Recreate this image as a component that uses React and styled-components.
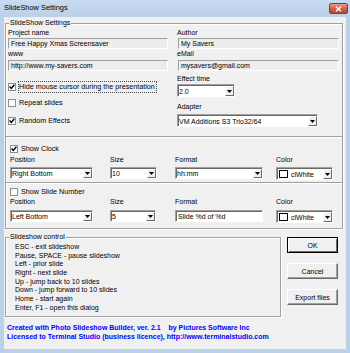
import React from 'react'
import styled, { createGlobalStyle } from 'styled-components'

const GlobalStyle = createGlobalStyle`
  html, body {
    margin: 0;
    padding: 0;
  }
  body {
    font-family: "Liberation Sans", Arial, sans-serif;
    font-size: 7px;
    color: #000;
  }
`;

const Window = styled.div`
  width: 350px;
  height: 353px;
  box-sizing: border-box;
  padding: 0 4px 4px 4px;
  background: linear-gradient(#c8dbef, #bad1ea 16px, #bad1ea);
  display: flex;
  flex-direction: column;
`;

const TitleBar = styled.div`
  height: 17px;
  flex: none;
  display: flex;
  justify-content: space-between;
  align-items: flex-start;
`;

const Title = styled.div`
  padding-top: 4px;
  font-size: 7.4px;
  line-height: 8px;
`;

const CloseButton = styled.div`
  margin: 3px -2px 0 0;
  width: 19px;
  height: 11px;
  box-sizing: border-box;
  border: 1px solid #8a3a31;
  border-radius: 2px;
  background: linear-gradient(#e6a192, #d0604f 50%, #c04532);
  display: flex;
  align-items: center;
  justify-content: center;
`;

const Client = styled.div`
  flex: 1;
  background: #f0f0f0;
  padding: 0 3px 0 1px;
  display: flex;
  flex-direction: column;
`;

const Group = styled.div`
  position: relative;
  box-sizing: border-box;
  border: 1px solid #a0a0a0;
  box-shadow: inset 1px 1px 0 #fff, 1px 1px 0 #fff;
`;

const Legend = styled.span`
  position: absolute;
  top: -5px;
  left: 3px;
  padding: 0 1px;
  line-height: 8px;
  background: #f0f0f0;
`;

const MainGroup = styled(Group)`
  margin-top: 6px;
  height: 114px;
  padding: 5px 3px 0 2px;
  display: flex;
  gap: 9px;
`;

const Column = styled.div`
  width: ${p => p.$w}px;
  display: flex;
  flex-direction: column;
`;

const Label = styled.div`
  line-height: 8px;
  height: 8px;
  margin-top: ${p => p.$mt || 0}px;
  white-space: nowrap;
`;

const Field = styled.div`
  box-sizing: border-box;
  height: 11px;
  margin: ${p => p.$mt || 0}px 0 0 ${p => p.$ml || 0}px;
  padding-left: 2px;
  line-height: 9px;
  background: #ededed;
  border: 1px solid;
  border-color: #a0a0a0 #fff #fff #a0a0a0;
  white-space: nowrap;
  overflow: hidden;
`;

const CheckRow = styled.div`
  height: 11px;
  margin-top: ${p => p.$mt || 0}px;
  display: flex;
  align-items: center;
`;

const Box = styled.div`
  width: 8px;
  height: 8px;
  box-sizing: border-box;
  border: 1px solid #8e8f8f;
  background: linear-gradient(135deg, #f4f4f4, #fff);
  display: flex;
  align-items: center;
  justify-content: center;
`;

const CheckText = styled.span`
  margin-left: 2px;
  padding: 1px 1px 1px 0;
  line-height: 8px;
  font-size: 7.2px;
  border: 1px dotted ${p => (p.$focus ? '#4a4a4a' : 'transparent')};
  white-space: nowrap;
`;

const SelectBox = styled.div`
  box-sizing: border-box;
  width: ${p => p.$w}px;
  height: ${p => p.$h || 12}px;
  margin-top: ${p => p.$mt || 0}px;
  background: #fff;
  border: 1px solid;
  border-color: #a0a0a0 #fff #fff #a0a0a0;
  box-shadow: inset 1px 1px 0 #696969;
  display: flex;
  align-items: stretch;
`;

const SelectText = styled.div`
  flex: 1;
  display: flex;
  align-items: center;
  gap: 3px;
  padding-left: ${p => (p.$swatch ? 2 : 1)}px;
  padding-top: 1px;
  white-space: nowrap;
  overflow: hidden;
`;

const ArrowButton = styled.div`
  width: 9px;
  margin: 1px 0 0 0;
  box-sizing: border-box;
  background: #f0f0f0;
  border: 1px solid;
  border-color: #fff #696969 #696969 #fff;
  display: flex;
  align-items: center;
  justify-content: center;
`;

const Swatch = styled.div`
  width: 9px;
  height: 8px;
  box-sizing: border-box;
  border: 1px solid #000;
  background: ${p => p.$color};
`;

const TextInput = styled(SelectBox)`
  padding-left: 2px;
  line-height: 9px;
  align-items: center;
`;

const Panel = styled(Group)`
  margin-top: -1px;
  height: 47px;
  padding: ${p => p.$pt}px 0 0 4px;
`;

const ControlGrid = styled.div`
  margin-top: ${p => p.$mt}px;
  display: grid;
  grid-template-columns: 100px 65px 101px 57px;
  grid-template-rows: 8px auto;
  row-gap: ${p => p.$gap}px;
  align-items: start;
`;

const BottomRow = styled.div`
  margin-top: 8px;
  display: flex;
  align-items: flex-start;
`;

const ControlGroup = styled(Group)`
  width: 276px;
  height: 80px;
  padding: 5px 0 0 9px;
`;

const HelpLine = styled.div`
  line-height: 8.67px;
  white-space: nowrap;
`;

const Buttons = styled.div`
  margin-left: 6px;
  display: flex;
  flex-direction: column;
  gap: 10px;
`;

const Button = styled.div`
  width: 51px;
  height: 16px;
  box-sizing: border-box;
  background: #f0f0f0;
  border: 1px solid;
  border-color: ${p => (p.$default ? '#000' : '#fff #696969 #696969 #fff')};
  box-shadow: ${p =>
    p.$default
      ? 'inset 1px 1px 0 #fff, inset -1px -1px 0 #696969'
      : 'inset -1px -1px 0 #a0a0a0'};
  display: flex;
  align-items: center;
  justify-content: center;
`;

const Footer = styled.div`
  margin-top: 6px;
  padding-left: 2px;
  color: #0000ff;
  font-weight: bold;
  font-size: 7px;
  line-height: 9px;
  white-space: pre;
`;

const Arrow = () => (
  <svg width="5" height="3" viewBox="0 0 5 3">
    <path d="M0 0h5L2.5 3z" fill="#000" />
  </svg>
)

const Check = ({ checked, children, focus, mt }) => (
  <CheckRow $mt={mt}>
    <Box>
      {checked && (
        <svg width="6" height="6" viewBox="0 0 6 6">
          <path d="M0.6 2.6l1.7 1.8L5.4 0.8" fill="none" stroke="#000" strokeWidth="1.4" />
        </svg>
      )}
    </Box>
    <CheckText $focus={focus}>{children}</CheckText>
  </CheckRow>
)

const Select = ({ w, h, mt, children, swatch }) => (
  <SelectBox $w={w} $h={h} $mt={mt}>
    <SelectText $swatch={swatch}>
      {swatch && <Swatch $color={swatch} />}
      {children}
    </SelectText>
    <ArrowButton>
      <Arrow />
    </ArrowButton>
  </SelectBox>
)

const helpLines = [
  'ESC - exit slideshow',
  'Pause, SPACE - pause slideshow',
  'Left - prior slide',
  'Right - next slide',
  'Up - jump back to 10 slides',
  'Down - jump forward to 10 slides',
  'Home - start again',
  'Enter, F1 - open this dialog',
]

const App = () => {
  return (
    <>
      <GlobalStyle />
      <Window>
        <TitleBar>
          <Title>SlideShow Settings</Title>
          <CloseButton>
            <svg width="7" height="6" viewBox="0 0 7 6">
              <path d="M1 0.8l5 4.4M6 0.8l-5 4.4" stroke="#fff" strokeWidth="1.5" />
            </svg>
          </CloseButton>
        </TitleBar>
        <Client>
          <MainGroup>
            <Legend>SlideShow Settings</Legend>
            <Column $w={160}>
              <Label>Project name</Label>
              <Field $mt={1}>Free Happy Xmas Screensaver</Field>
              <Label $mt={1}>www</Label>
              <Field $mt={2}>http://www.my-savers.com</Field>
              <Check checked focus mt={10}>Hide mouse cursor during the presentation</Check>
              <Check mt={5}>Repeat slides</Check>
              <Check checked mt={7}>Random Effects</Check>
            </Column>
            <Column $w={162}>
              <Label>Author</Label>
              <Field $mt={1} $ml={1}>My Savers</Field>
              <Label $mt={1}>eMail</Label>
              <Field $mt={2} $ml={1}>mysavers@gmail.com</Field>
              <Label $mt={4}>Effect time</Label>
              <Select w={58} h={13} mt={1}>2.0</Select>
              <Label $mt={6}>Adapter</Label>
              <Select w={141} h={13} mt={3}>VM Additions S3 Trio32/64</Select>
            </Column>
          </MainGroup>

          <Panel $pt={6}>
            <Check checked>Show Clock</Check>
            <ControlGrid $mt={2} $gap={3}>
              <Label>Position</Label>
              <Label>Size</Label>
              <Label>Format</Label>
              <Label>Color</Label>
              <Select w={83}>Right Bottom</Select>
              <Select w={47}>10</Select>
              <Select w={88}>hh:mm</Select>
              <Select w={57} h={13} swatch="#fff">clWhite</Select>
            </ControlGrid>
          </Panel>

          <Panel $pt={3}>
            <Check>Show Slide Number</Check>
            <ControlGrid $mt={1} $gap={4}>
              <Label>Position</Label>
              <Label>Size</Label>
              <Label>Format</Label>
              <Label>Color</Label>
              <Select w={83}>Left Bottom</Select>
              <Select w={46}>5</Select>
              <TextInput $w={88}>Slide %d of %d</TextInput>
              <Select w={57} h={13} swatch="#fff">clWhite</Select>
            </ControlGrid>
          </Panel>

          <BottomRow>
            <ControlGroup>
              <Legend>Slideshow control</Legend>
              {helpLines.map(line => (
                <HelpLine key={line}>{line}</HelpLine>
              ))}
            </ControlGroup>
            <Buttons>
              <Button $default>OK</Button>
              <Button>Cancel</Button>
              <Button>Export files</Button>
            </Buttons>
          </BottomRow>

          <Footer>
            {'Created with Photo Slideshow Builder, ver. 2.1    by Pictures Software Inc\n'}
            {'Licensed to Terminal Studio (business licence), http://www.terminalstudio.com'}
          </Footer>
        </Client>
      </Window>
    </>
  )
}

export default App
